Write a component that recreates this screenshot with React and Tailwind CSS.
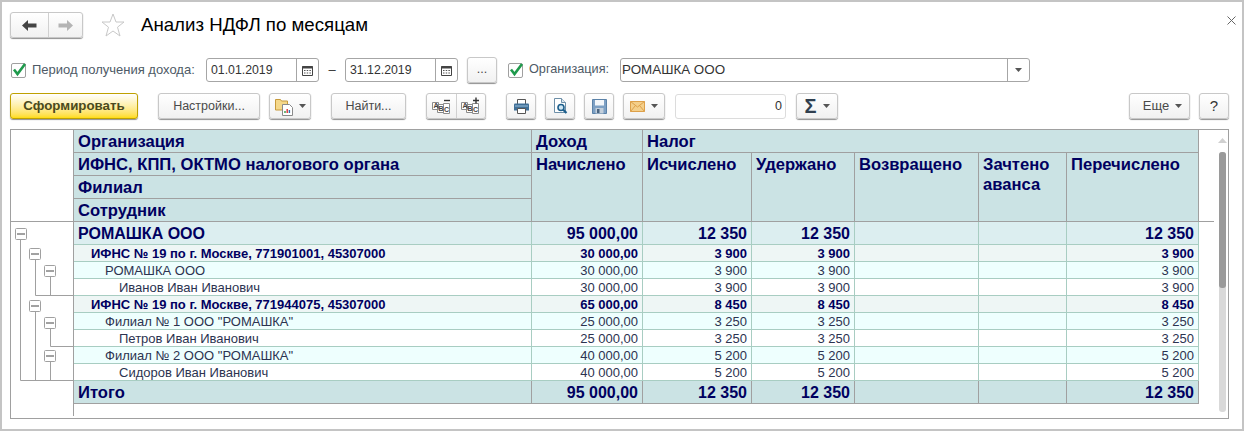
import React from 'react';

const FONT = "font-['Liberation_Sans',Arial,sans-serif]";

const Caret = () => (
  <svg width="7" height="4" viewBox="0 0 7 4" aria-hidden="true">
    <path d="M0 0h7L3.5 4z" fill="#555" />
  </svg>
);

const Check = () => (
  <span className="flex h-[15px] w-[15px] shrink-0 items-center justify-center rounded-[2px] border border-[#a0a0a0] bg-white">
    <svg width="17" height="15" viewBox="0 0 17 15" className="-mt-[2px] ml-[2px] shrink-0" aria-hidden="true">
      <path d="M3 7.5l3.5 4.5L14 2" fill="none" stroke="#1f9a4c" strokeWidth="2.6" />
    </svg>
  </span>
);

const Calendar = () => (
  <svg width="11" height="11" viewBox="0 0 11 11" aria-hidden="true">
    <path d="M0.5 1.5h10v9h-10z" fill="#fff" stroke="#444" />
    <path d="M0.5 1h10v2.5h-10z" fill="#444" />
    <path d="M2 5h1.5v1H2zM4.7 5h1.5v1H4.7zM7.4 5h1.5v1H7.4zM2 7.5h1.5v1H2zM4.7 7.5h1.5v1H4.7zM7.4 7.5h1.5v1H7.4z" fill="#555" />
  </svg>
);

const Btn = ({ className = '', children }) => (
  <div
    className={`flex h-[26px] shrink-0 items-center justify-center rounded-[3px] border border-[#c8c8c8] bg-gradient-to-b from-white to-[#f1f1f1] text-[12.5px] text-[#4a4a4a] shadow-[0_1px_1px_#8f8f8f] ${className}`}
  >
    {children}
  </div>
);

const DateField = ({ value }) => (
  <div className="flex h-[24px] w-[113px] shrink-0 items-center rounded-[3px] border border-[#a6a6a6] bg-white text-[12.3px] text-[#333]">
    <span className="w-[90px] border-r border-[#a6a6a6] pl-[4px] leading-[22px]">{value}</span>
    <span className="flex flex-1 justify-center">
      <Calendar />
    </span>
  </div>
);

const AbcIcon = ({ plus }) => (
  <svg width="21" height="18" viewBox="0 0 21 18" fontFamily="Liberation Sans" fontWeight="700" fontSize="7" fill="#444" aria-hidden="true">
    <path d="M1.500 5.500h6v7h-6zM6.500 7.500h6v8h-6zM12.500 6.500h6v10h-6z" fill="#fff" stroke="#8a8a8a" />
    <text x="2.500" y="11">A</text>
    <text x="7.500" y="14">B</text>
    <text x="13" y="15">C</text>
    <path d={plus ? 'M13 3.500h6M16 .5v6' : 'M13 3.500h6'} stroke="#333" strokeWidth="1.400" />
  </svg>
);

const Printer = () => (
  <svg width="15" height="15" viewBox="0 0 15 15" aria-hidden="true">
    <path d="M3.5.5h8v5h-8z" fill="#fff" stroke="#555" />
    <path d="M0 5.5q0-1 1-1h13q1 0 1 1v6H0z" fill="#3f6f97" />
    <path d="M3.5 9.500h8v5h-8z" fill="#fff" stroke="#555" />
    <path d="M1 7h13" stroke="#9cc0da" />
  </svg>
);

const Preview = () => (
  <svg width="15" height="16" viewBox="0 0 15 16" aria-hidden="true">
    <path d="M1.5.5h7l4 4v10h-11z" fill="#fff" stroke="#6d8fa8" />
    <path d="M8.5.5v4h4" fill="#dbe7ef" stroke="#6d8fa8" />
    <circle cx="8" cy="9.500" r="3" fill="#cfe6f3" stroke="#1d5f8c" strokeWidth="1.600" />
    <path d="M10 11.500l3.500 3.500" stroke="#1d5f8c" strokeWidth="2.200" />
  </svg>
);

const Floppy = () => (
  <svg width="15" height="15" viewBox="0 0 15 15" aria-hidden="true">
    <path d="M.5.5h14v14H.5z" fill="#7da0c4" stroke="#5b82a8" />
    <path d="M3 1h9v5.500H3z" fill="#f2f6fa" />
    <path d="M3.500 9h8v5.500h-8z" fill="#c3cfdb" />
    <path d="M5 10h2.500v4H5z" fill="#4a6480" />
  </svg>
);

const Mail = () => (
  <svg width="15" height="11" viewBox="0 0 15 11" aria-hidden="true">
    <path d="M.5.5h14v10H.5z" fill="#f4cf8a" stroke="#dda04a" />
    <path d="M.5.5l7 5.500 7-5.500M.5 10.500l5-6M14.500 10.500l-5-6" fill="none" stroke="#dda04a" />
  </svg>
);

const Reports = () => (
  <svg width="18" height="19" viewBox="0 0 18 19" aria-hidden="true">
    <path d="M.5 2.500h5l1 1.500h6v9H.5z" fill="#f5d88a" stroke="#c79a3c" />
    <path d="M7.500 7.500h7l3 3v8h-10z" fill="#fff" stroke="#8a8a8a" />
    <path d="M10 16v-2" stroke="#2f9a46" strokeWidth="1.400" />
    <path d="M12.200 16v-4" stroke="#d33" strokeWidth="1.400" />
    <path d="M14.400 16v-3" stroke="#2f6fb0" strokeWidth="1.400" />
  </svg>
);

const Divider = ({ className = '' }) => <span className={`h-full w-px bg-[#d0d0d0] ${className}`} />;

const ROWS = [
  { t: 'ИФНС № 19 по г. Москве, 771901001, 45307000', lvl: 2, v: ['30 000,00', '3 900', '3 900', '', '', '3 900'] },
  { t: 'РОМАШКА ООО', lvl: 3, v: ['30 000,00', '3 900', '3 900', '', '', '3 900'] },
  { t: 'Иванов Иван Иванович', lvl: 4, v: ['30 000,00', '3 900', '3 900', '', '', '3 900'] },
  { t: 'ИФНС № 19 по г. Москве, 771944075, 45307000', lvl: 2, v: ['65 000,00', '8 450', '8 450', '', '', '8 450'] },
  { t: 'Филиал № 1 ООО "РОМАШКА"', lvl: 3, v: ['25 000,00', '3 250', '3 250', '', '', '3 250'] },
  { t: 'Петров Иван Иванович', lvl: 4, v: ['25 000,00', '3 250', '3 250', '', '', '3 250'] },
  { t: 'Филиал № 2 ООО "РОМАШКА"', lvl: 3, v: ['40 000,00', '5 200', '5 200', '', '', '5 200'] },
  { t: 'Сидоров Иван Иванович', lvl: 4, v: ['40 000,00', '5 200', '5 200', '', '', '5 200'] },
];

const LEVEL = {
  2: { bg: 'bg-[#eef6f5]', text: 'font-bold text-[#000060]', pad: 'pl-[17px]' },
  3: { bg: 'bg-[#eefffe]', text: 'text-[#2c3350]', pad: 'pl-[31px]' },
  4: { bg: 'bg-white', text: 'text-[#2c3350]', pad: 'pl-[45px]' },
};

const HEAD = 'border-r border-b border-[#a0a0a0] bg-[#cbe3e4] px-[4px] text-[16.6px] font-bold leading-[24px] text-[#000060]';
const TOTAL_NUM = 'border-r border-b border-[#a0a0a0] bg-[#cbe3e4] pr-[4px] text-right text-[16px] font-bold leading-[24px] text-[#000060]';

const TreeBox = ({ x, y }) => (
  <g>
    <rect x={x + 0.5} y={y + 0.5} width="11" height="11" rx="1" fill="#fff" stroke="#a0a0a0" />
    <path d={`M${x + 2} ${y + 6}h8`} stroke="#444" />
  </g>
);

// дерево группировок слева, координаты от верха первой строки данных
const Tree = () => (
  <svg width="62" height="159" viewBox="0 0 62 159" className="block" aria-hidden="true">
    <path
      d="M9.500 18V158.500H62M24.500 37V73.500H62M24.500 89V158.500M39.500 54V73.500M39.500 106V124.500H62M39.500 139V158.500"
      fill="none"
      stroke="#a0a0a0"
    />
    <TreeBox x={4} y={6} />
    <TreeBox x={18} y={26} />
    <TreeBox x={33} y={43} />
    <TreeBox x={18} y={78} />
    <TreeBox x={33} y={95} />
    <TreeBox x={33} y={128} />
  </svg>
);

export default function App() {
  return (
    <div className={`h-[431px] w-[1244px] bg-[#c4c4c4] p-[2px] ${FONT}`}>
      <div className="flex h-[427px] w-[1240px] flex-col bg-white pl-[8px]">
        {/* заголовок */}
        <div className="flex h-[55px] items-start pt-[10px]">
          <Btn className="h-[23px] w-[73px] !justify-start">
            <span className="flex w-[37px] justify-center">
              <svg width="15" height="11" viewBox="0 0 15 11" aria-hidden="true">
                <path d="M6 0v3.500h8.500v4H6V11L0 5.500z" fill="#444" />
              </svg>
            </span>
            <Divider />
            <span className="flex flex-1 justify-center">
              <svg width="15" height="11" viewBox="0 0 15 11" aria-hidden="true">
                <path d="M9 0v3.500H.5v4H9V11l6-5.500z" fill="#b4b4b4" />
              </svg>
            </span>
          </Btn>
          <svg width="24" height="24" viewBox="0 0 24 24" className="ml-[18px] mt-px" aria-hidden="true">
            <path d="M12 1l3 8h8l-6.500 5.200L19 23l-7-5-7 5 2.500-8.800L1 9h8z" fill="#fff" stroke="#c8c8c8" />
          </svg>
          <h1 className="ml-[16px] mt-px text-[18.67px] leading-[24px] text-black">Анализ НДФЛ по месяцам</h1>
          <svg width="9" height="9" viewBox="0 0 9 9" className="ml-auto mr-[6px] mt-[4px]" aria-hidden="true">
            <path d="M.5.5l8 8M8.500.5l-8 8" stroke="#666" />
          </svg>
        </div>

        {/* отбор */}
        <div className="flex h-[26px] items-center text-[13px] text-[#4e5a66]">
          <span className="ml-px"><Check /></span>
          <span className="ml-[6px] w-[174px]">Период получения дохода:</span>
          <DateField value="01.01.2019" />
          <span className="w-[26px] text-center text-[#333]">–</span>
          <DateField value="31.12.2019" />
          <Btn className="ml-[9px] w-[30px] pb-[2px]">...</Btn>
          <span className="ml-[11px]"><Check /></span>
          <span className="ml-[6px] w-[91px] text-[12.7px]">Организация:</span>
          <div className="flex h-[24px] w-[410px] items-center rounded-[3px] border border-[#a6a6a6] bg-white text-[#333]">
            <span className="flex-1 border-r border-[#a6a6a6] pl-[1px] text-[13.4px] leading-[22px]">РОМАШКА ООО</span>
            <span className="flex w-[21px] justify-center"><Caret /></span>
          </div>
        </div>

        {/* командная панель */}
        <div className="mt-[10px] flex h-[26px] items-center">
          <Btn className="w-[128px] !border-[#bfa100] from-[#fff176] to-[#ffdc00] text-[13.3px] font-bold !text-[#4a4a20]">
            Сформировать
          </Btn>
          <Btn className="ml-[20px] w-[102px]">Настройки...</Btn>
          <Btn className="ml-[9px] w-[42px] gap-[6px] pl-px">
            <Reports />
            <Caret />
          </Btn>
          <Btn className="ml-[20px] w-[75px]">Найти...</Btn>
          <Btn className="ml-[20px] w-[60px]">
            <span className="flex flex-1 justify-center"><AbcIcon /></span>
            <Divider />
            <span className="flex flex-1 justify-center"><AbcIcon plus /></span>
          </Btn>
          <Btn className="ml-[20px] w-[30px]"><Printer /></Btn>
          <Btn className="ml-[9px] w-[30px]"><Preview /></Btn>
          <Btn className="ml-[9px] w-[30px]"><Floppy /></Btn>
          <Btn className="ml-[9px] w-[42px] gap-[6px]">
            <Mail />
            <Caret />
          </Btn>
          <div className="ml-[10px] h-[25px] w-[111px] rounded-[3px] border border-[#dcdcdc] pr-[3px] text-right text-[12.5px] leading-[23px] text-[#333]">
            0
          </div>
          <Btn className="ml-[10px] w-[42px] gap-[6px] text-[20px] font-bold !text-[#2f3f4f]">
            <span className="leading-none">Σ</span>
            <Caret />
          </Btn>
          <Btn className="ml-auto w-[61px] gap-[6px] pl-[6px] text-[13px]">
            Еще
            <Caret />
          </Btn>
          <Btn className="ml-[9px] mr-[13px] w-[30px] text-[15px] !text-[#333]">?</Btn>
        </div>

        {/* отчет */}
        <div className="mt-[10px] flex h-[290px] w-[1219px] border border-[#a0a0a0] text-[13px]">
          <div className="grid h-[288px] w-[1203px] grid-cols-[63px_458px_111px_109px_103px_124px_88px_132px_15px] grid-rows-[23px_23px_23px_23px_23px_repeat(8,17px)_23px_1fr]">
            <div className="col-start-1 row-span-4 row-start-1 border-r border-b border-[#a0a0a0]" />
            <div className={HEAD}>Организация</div>
            <div className={HEAD}>Доход</div>
            <div className={`${HEAD} col-span-5`}>Налог</div>
            <div className="col-start-9 row-span-4 row-start-1 border-b border-[#a0a0a0]" />

            <div className={`${HEAD} col-start-2 row-start-2`}>ИФНС, КПП, ОКТМО налогового органа</div>
            <div className={`${HEAD} col-start-3 row-span-3 row-start-2`}>Начислено</div>
            <div className={`${HEAD} row-span-3 row-start-2`}>Исчислено</div>
            <div className={`${HEAD} row-span-3 row-start-2`}>Удержано</div>
            <div className={`${HEAD} row-span-3 row-start-2`}>Возвращено</div>
            <div className={`${HEAD} row-span-3 row-start-2 !leading-[20px] pt-[2px]`}>
              Зачтено
              <br />
              аванса
            </div>
            <div className={`${HEAD} row-span-3 row-start-2`}>Перечислено</div>
            <div className={`${HEAD} col-start-2 row-start-3`}>Филиал</div>
            <div className={`${HEAD} col-start-2 row-start-4`}>Сотрудник</div>

            <div className="col-start-1 row-span-9 row-start-5 border-r border-[#a0a0a0]">
              <Tree />
            </div>

            <div className="col-start-2 row-start-5 border-r border-b border-[#a8cdc2] bg-[#dceef0] px-[4px] text-[16px] font-bold leading-[24px] text-[#000060]">
              РОМАШКА ООО
            </div>
            {['95 000,00', '12 350', '12 350', '', '', '12 350'].map((v, i) => (
              <div
                key={i}
                className="border-r border-b border-[#a8cdc2] bg-[#dceef0] pr-[4px] text-right text-[16px] font-bold leading-[24px] text-[#000060]"
              >
                {v}
              </div>
            ))}

            {ROWS.map((row, r) => (
              <React.Fragment key={r}>
                <div
                  className={`col-start-2 whitespace-nowrap border-r border-b border-[#a8cdc2] leading-[18px] ${LEVEL[row.lvl].bg} ${LEVEL[row.lvl].text} ${LEVEL[row.lvl].pad}`}
                >
                  {row.t}
                </div>
                {row.v.map((v, i) => (
                  <div
                    key={i}
                    className={`border-r border-b border-[#a8cdc2] pr-[4px] text-right leading-[18px] ${LEVEL[row.lvl].bg} ${LEVEL[row.lvl].text}`}
                  >
                    {v}
                  </div>
                ))}
              </React.Fragment>
            ))}

            <div className="col-start-1 border-r border-[#a0a0a0]" />
            <div className={HEAD}>Итого</div>
            {['95 000,00', '12 350', '12 350', '', '', '12 350'].map((v, i) => (
              <div key={i} className={TOTAL_NUM}>
                {v}
              </div>
            ))}
            <div className="col-start-1 mb-[2px] border-r border-[#a0a0a0]" />
          </div>

          {/* полоса прокрутки */}
          <div className="flex w-[14px] flex-col items-center pl-[3px] pt-[8px]">
            <svg width="9" height="5" viewBox="0 0 9 5" aria-hidden="true">
              <path d="M4.500 0L9 5H0z" fill="#d0d0d0" />
            </svg>
            <div className="mt-[9px] h-[260px] w-[7px] rounded-[3px] bg-[#d9d9d9]">
              <div className="h-[136px] rounded-[3px] bg-[#9a9a9a]" />
            </div>
          </div>
        </div>
      </div>
    </div>
  );
}
